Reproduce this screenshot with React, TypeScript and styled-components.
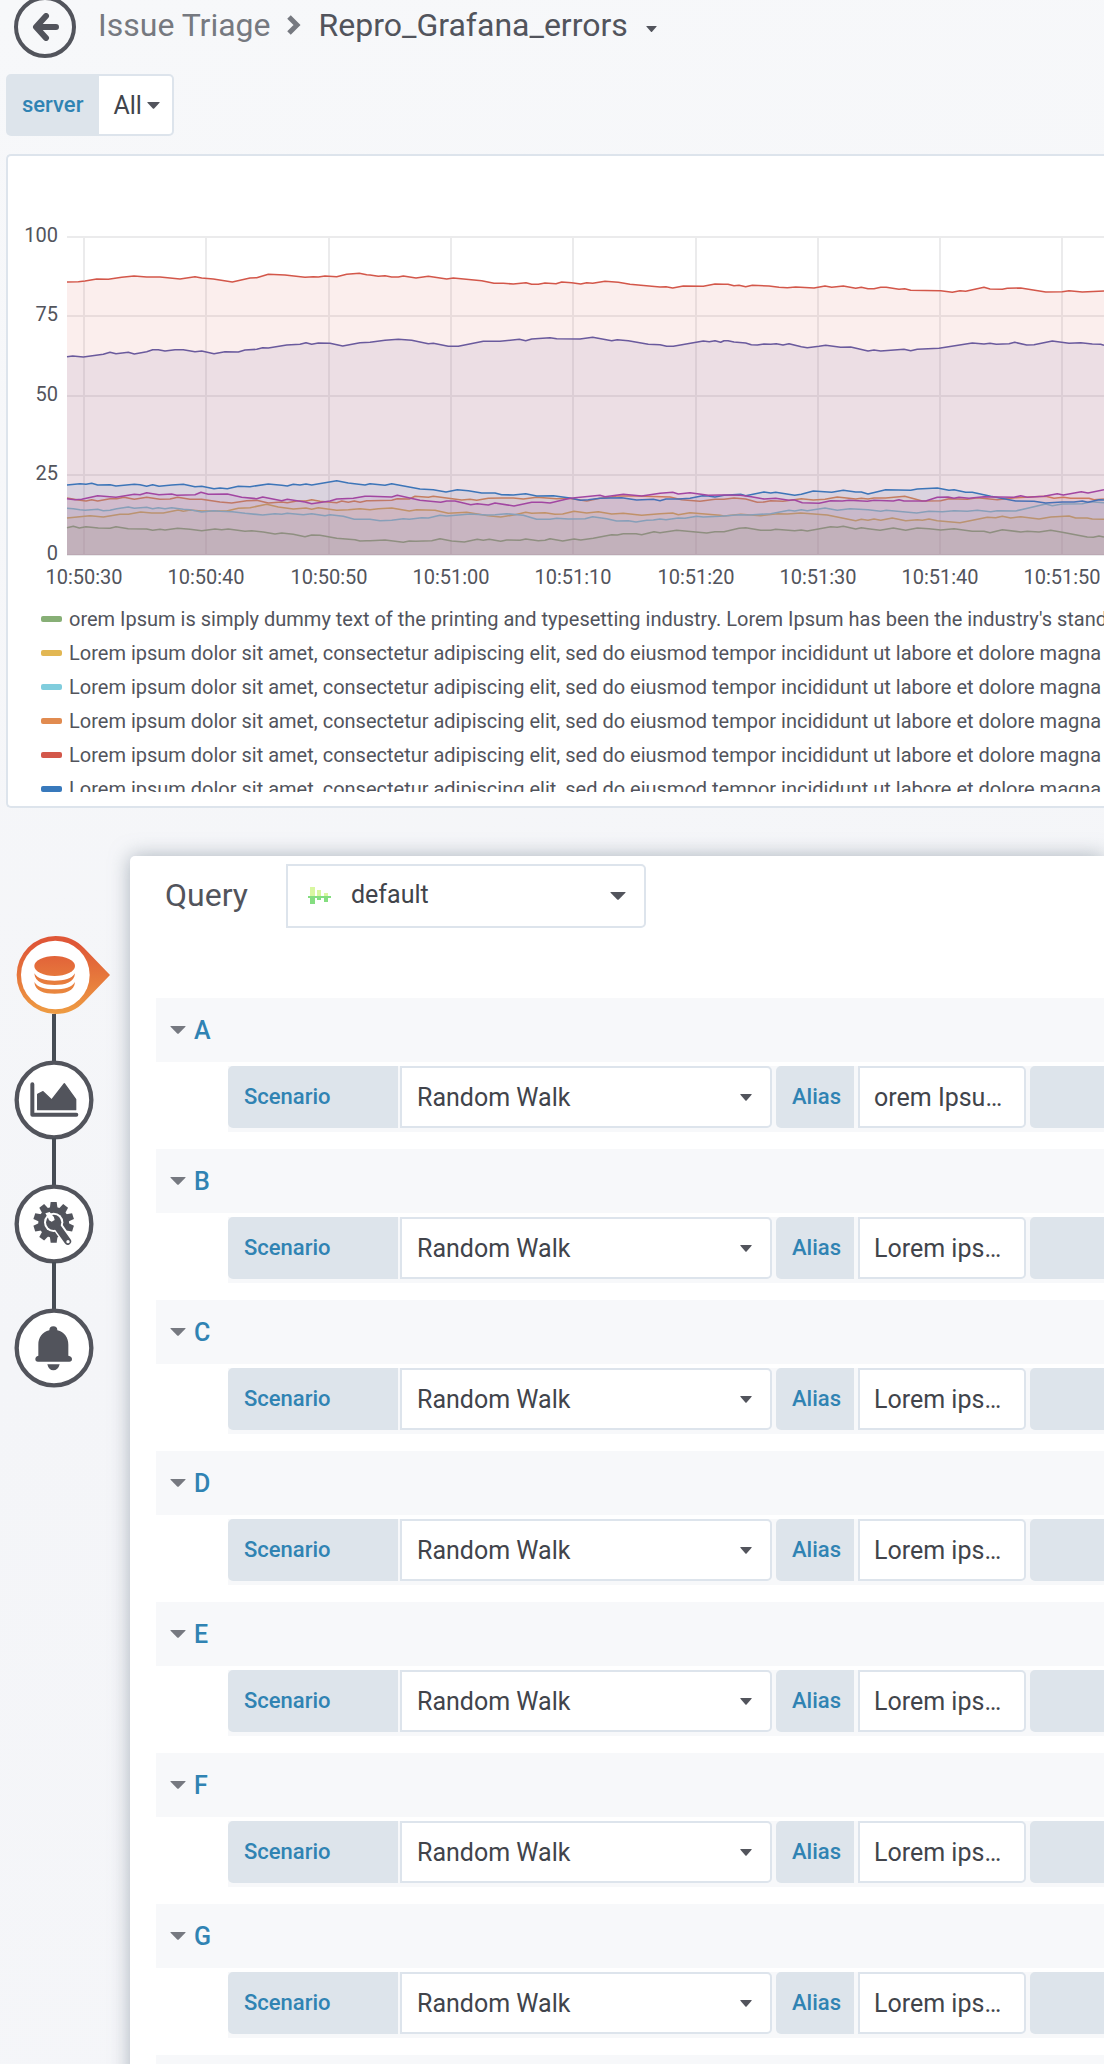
import React from "react";
import styled, { createGlobalStyle } from "styled-components";

const color = {
  text: "#52545c",
  textStrong: "#41444b",
  textWeak: "#767980",
  blue: "#3083b3",
  line: "#dde4ec",
  label: "#dde4eb",
  page: "#f7f8fa",
};

const GlobalStyle = createGlobalStyle`
  * { box-sizing: border-box; }
  body {
    margin: 0;
    font-family: Roboto, "Liberation Sans", sans-serif;
    color: ${color.text};
    background: ${color.page};
  }
  button, input, select { font: inherit; color: inherit; margin: 0; }
`;

const Shell = styled.div`
  height: 100vh;
  overflow: hidden;
  display: flex;
  flex-direction: column;
  background: linear-gradient(170deg, #f7f8fa 0%, #f4f5f8 60%, #f5f6f9 100%);
`;

/* ---------- top bar ---------- */

const TopBar = styled.header`
  flex: none;
  height: 54px;
  display: flex;
  align-items: center;
  padding-left: 14px;
`;

const BackButton = styled.button`
  flex: none;
  width: 62px;
  height: 62px;
  padding: 0;
  display: grid;
  place-items: center;
  border: 4px solid ${color.text};
  border-radius: 50%;
  background: none;
`;

const Crumbs = styled.nav`
  display: flex;
  align-items: center;
  padding: 0 0 4px 22px;
  font-size: 32px;
  line-height: 40px;
  white-space: nowrap;
`;

const FolderLink = styled.a`
  color: ${color.textWeak};
  text-decoration: none;
`;

const CrumbSeparator = styled.svg`
  margin: 0 18px 0 16px;
`;

const TitleButton = styled.button`
  display: flex;
  align-items: center;
  gap: 18px;
  padding: 0;
  border: 0;
  background: none;

  svg { margin-top: 8px; }
`;

/* ---------- form parts ---------- */

const Label = styled.label<{ $width?: number }>`
  flex: none;
  width: ${(p) => (p.$width ? `${p.$width}px` : "auto")};
  padding: 0 16px 2px;
  display: flex;
  align-items: center;
  background: ${color.label};
  border-radius: 5px 0 0 5px;
  color: ${color.blue};
  font-size: 22px;
  font-weight: 500;
`;

const SelectBox = styled.div<{ $width?: number }>`
  flex: none;
  width: ${(p) => (p.$width ? `${p.$width}px` : "auto")};
  display: grid;
  align-items: center;
  background: #fff;
  border: 2px solid ${color.line};
  border-radius: 0 5px 5px 0;

  > * { grid-area: 1 / 1; }
  > svg:last-child { justify-self: end; margin-right: 18px; pointer-events: none; }
`;

const Select = styled.select<{ $left?: number; $right?: number; $lift?: number }>`
  appearance: none;
  width: 100%;
  height: 100%;
  padding: 0 ${(p) => p.$right ?? 40}px ${(p) => p.$lift ?? 0}px ${(p) => p.$left ?? 15}px;
  border: 0;
  outline: 0;
  background: none;
  color: ${color.textStrong};
  font-size: 25px;
`;

const TextInput = styled.input`
  flex: none;
  width: 168px;
  padding: 0 16px 0 14px;
  border: 2px solid ${color.line};
  border-radius: 0 5px 5px 0;
  outline: 0;
  background: #fff;
  color: ${color.textStrong};
  font-size: 25px;
  text-overflow: ellipsis;
`;

const Variables = styled.section`
  flex: none;
  display: flex;
  height: 62px;
  margin: 20px 0 18px 6px;

  ${SelectBox} { border-left: 0; }
  ${SelectBox} > svg:last-child { margin-right: 12px; }
`;

/* ---------- graph panel ---------- */

const GraphPanel = styled.section`
  flex: none;
  margin-left: 6px;
  padding: 64px 0 14px 0;
  background: #fff;
  border: 2px solid ${color.line};
  border-right: 0;
  border-radius: 5px 0 0 5px;
`;

const ChartSvg = styled.svg`
  display: block;
  width: 100%;
  height: 378px;
  font-size: 20px;
  fill: ${color.text};
`;

const Legend = styled.ul`
  height: 194px;
  margin: 0;
  padding: 4px 0 0 33px;
  overflow: hidden;
  list-style: none;
`;

const LegendItem = styled.li`
  display: flex;
  align-items: center;
  gap: 7px;
  height: 34px;
  font-size: 20px;
  white-space: nowrap;
`;

const Swatch = styled.span<{ $color: string }>`
  flex: none;
  width: 21px;
  height: 6px;
  border-radius: 2px;
  background: ${(p) => p.$color};
`;

/* ---------- editor ---------- */

const Editor = styled.div`
  flex: 1 0 auto;
  display: flex;
  margin-top: 48px;
`;

const Steps = styled.nav`
  flex: none;
  width: 130px;
  display: flex;
  flex-direction: column;
  align-items: flex-start;
  padding: 80px 0 0 14px;
`;

const StepButton = styled.button`
  width: 80px;
  height: 80px;
  padding: 0;
  border: 0;
  background: none;

  svg { display: block; overflow: visible; }
`;

const StepLine = styled.span`
  width: 4px;
  height: 48px;
  margin: -2px 0 -2px 38px;
  background: #464c54;
`;

const QueryPanel = styled.main`
  flex: 1;
  min-width: 0;
  padding-top: 8px;
  background: #fff;
  border-radius: 5px 0 0 0;
  box-shadow: 0 0 20px rgba(120, 135, 148, 0.6);
`;

const QueryHead = styled.div`
  display: flex;
  height: 64px;
  margin-bottom: 70px;
  padding-left: 35px;
`;

const QueryTitle = styled.label`
  width: 121px;
  font-size: 32px;
  line-height: 62px;
`;

const SourceIcon = styled.svg`
  margin-left: 20px;
`;

const QueryList = styled.div`
  display: flex;
  flex-direction: column;
  gap: 17px;
  padding-left: 26px;
`;

const RowHead = styled.button`
  width: 100%;
  height: 64px;
  padding: 0 0 0 14px;
  display: flex;
  align-items: center;
  gap: 8px;
  border: 0;
  background: ${color.page};
  color: ${color.blue};
  font-size: 25px;
  font-weight: 500;
`;

const Fields = styled.div`
  display: flex;
  gap: 4px;
  height: 66px;
  margin: 4px 0 0 72px;
  padding-bottom: 4px;
  background: ${color.page};
`;

const FieldPair = styled.div<{ $gap: number }>`
  flex: none;
  display: flex;
  gap: ${(p) => p.$gap}px;
`;

const FieldRest = styled.div`
  flex: 1;
  background: ${color.label};
  border-radius: 5px 0 0 5px;
`;

/* ---------- icons ---------- */

function Caret({ width, height, fill = color.text }: { width: number; height: number; fill?: string }) {
  return (
    <svg width={width} height={height} viewBox="0 0 16 8" preserveAspectRatio="none" aria-hidden="true">
      <path d="M1 0H15Q16 0 15.4 .8L8.8 7.5Q8 8.2 7.2 7.5L.6 .8Q0 0 1 0Z" fill={fill} />
    </svg>
  );
}

function StepFrame({ children }: { children: React.ReactNode }) {
  return (
    <svg width="80" height="80" viewBox="0 0 240 240" fill={color.text} aria-hidden="true">
      <circle cx="120" cy="120" r="112" fill="#fff" stroke={color.text} strokeWidth="13" />
      {children}
    </svg>
  );
}

function QueriesStep() {
  return (
    <svg width="80" height="80" viewBox="0 0 240 240" fill="url(#flame)" aria-hidden="true">
      <defs>
        <linearGradient id="flame" gradientUnits="userSpaceOnUse" x1="0" y1="0" x2="0" y2="234">
          <stop offset="0.1" stopColor="#df5737" />
          <stop offset="1" stopColor="#ee9c42" />
        </linearGradient>
      </defs>
      <path d="M125 0C160 0 190 14 210 36L288 117L210 198C190 220 160 234 125 234A117 117 0 0 1 125 0Z" />
      <circle cx="124" cy="117" r="103" fill="#fff" />
      <ellipse cx="122" cy="90" rx="61" ry="30" />
      <path d="M61 112C63 140 90 147 122 147S181 140 183 112C174 128 150 134 122 134S70 128 61 112Z" />
      <path d="M61 138C63 166 90 173 122 173S181 166 183 138C174 154 150 160 122 160S70 154 61 138Z" />
    </svg>
  );
}

function VisualizationStep() {
  return (
    <StepFrame>
      <path d="M55 73V164H187" fill="none" stroke={color.text} strokeWidth="12" strokeLinecap="round" strokeLinejoin="round" />
      <path d="M71 103L87 95L113 120L151 71L185 118V149H71Z" stroke={color.text} strokeWidth="4" strokeLinejoin="round" />
    </StepFrame>
  );
}

function GeneralStep() {
  const teeth = Array.from({ length: 10 }, (_, i) => i * 36);
  return (
    <StepFrame>
      <circle cx="119" cy="115" r="46" />
      {teeth.map((angle) => (
        <path key={angle} d="M107 76L110 54H128L131 76Z" transform={`rotate(${angle} 119 115)`} />
      ))}
      <circle cx="119" cy="115" r="29" fill="#fff" />
      <path d="M128 124L163 174" stroke="#fff" strokeWidth="31" strokeLinecap="round" />
      <path d="M124 120L161 172" stroke={color.text} strokeWidth="21" strokeLinecap="round" />
      <circle cx="119" cy="115" r="23" />
      <path d="M94 88L107 84L115 94Q123 100 122 108L113 113L105 109L101 99Z" fill="#fff" />
      <circle cx="162" cy="173" r="5" fill="#fff" />
    </StepFrame>
  );
}

function AlertStep() {
  return (
    <StepFrame>
      <path d="M106 67A12 12 0 0 1 130 67C152 72 163 90 163 110V143Q174 145 174 153T166 161H72Q64 161 64 153T73 143V110C73 90 84 72 106 67Z" />
      <path d="M100 169H137C134 181 127 187 118 187S103 181 100 169Z" />
    </StepFrame>
  );
}

/* ---------- chart ---------- */

const PLOT_LEFT = 59;
const PLOT_TOP = 17;
const PLOT_BOTTOM = 335;

const yTicks = [
  { y: 17, text: "100" },
  { y: 96, text: "75" },
  { y: 176, text: "50" },
  { y: 255, text: "25" },
  { y: 335, text: "0" },
];

const xTicks = [
  "10:50:30", "10:50:40", "10:50:50", "10:51:00", "10:51:10",
  "10:51:20", "10:51:30", "10:51:40", "10:51:50",
].map((text, i) => ({ text, x: Math.round(76 + i * 122.3) }));

const LOREM =
  "Lorem ipsum dolor sit amet, consectetur adipiscing elit, sed do eiusmod tempor incididunt ut labore et dolore magna aliqua";
const IPSUM =
  "orem Ipsum is simply dummy text of the printing and typesetting industry. Lorem Ipsum has been the industry's standard";

/* Each series is three consecutive stretches of samples, three units to a pixel. */
const STRETCH_START = [0, 1110, 2172];

type Series = { color: string; name: string; parts: string[] };

const series: Series[] = [
  {
    color: "#87af76",
    name: IPSUM,
    parts: [
      "201,923 220,919 238,924 258,920 295,924 330,925 348,920 385,926 440,927 458,931 480,928 495,930 533,925 570,928 605,932 645,927 665,929 685,927 735,934 755,932 790,936 825,942 845,939 880,943 915,950 935,945 960,946 1010,955 1065,959 1080,963 1100,962",
      "0,962 45,960 100,967 118,963 137,964 185,962 210,956 245,963 283,966 322,958 340,961 358,958 392,964 410,960 450,961 467,957 505,962 525,961 540,956 578,963 612,957 632,960 670,955 725,944 742,945 760,941 798,941 815,944 852,935 870,938 920,931 1010,939 1035,935",
      "0,935 45,925 65,923 110,931 140,931 155,928 212,932 232,930 250,933 320,920 340,922 358,919 395,927 412,923 432,926 468,931 508,924 545,931 580,924 615,926 650,930 690,926 745,934 780,934 798,938 835,929 890,936 910,934 945,936 980,931 1015,937 1090,951 1108,952 1125,948 1140,951",
    ],
  },
  {
    color: "#e2b753",
    name: LOREM,
    parts: [
      "201,894 270,887 310,891 360,883 385,883 422,876 455,879 490,879 535,870 550,874 570,870 605,873 680,873 715,865 750,863 800,853 835,861 880,867 918,864 935,868 955,863 1010,871 1045,869 1080,866",
      "0,869 25,866 65,864 118,873 140,869 195,871 235,880 290,877 355,887 392,891 435,884 467,877 485,880 525,878 555,883 578,882 612,874 650,879 685,875 725,882 760,880 815,886 870,881 908,879 925,884 960,878 1050,886",
      "0,888 50,883 110,887 160,881 190,882 230,879 310,885 395,902 412,898 432,901 450,897 470,901 505,894 545,902 580,899 595,901 615,897 640,902 708,908 790,892 815,893 835,889 860,894 890,890 945,897 980,891 1035,888 1055,894 1090,894 1105,897 1140,898",
    ],
  },
  {
    color: "#80cddd",
    name: LOREM,
    parts: [
      "201,865 220,866 240,869 255,871 293,868 310,872 330,871 350,866 385,861 403,865 440,862 458,866 475,863 495,866 515,863 550,868 570,869 605,876 640,872 660,874 697,875 735,880 788,885 825,881 845,883 862,880 910,884 935,881 975,887 990,884 1030,889 1063,898 1100,898",
      "0,898 30,902 65,901 100,896 118,898 155,893 175,894 210,886 230,888 275,884 300,882 350,885 375,884 410,881 460,886 500,898 540,898 560,895 595,897 645,896 668,890 710,896 740,903 775,902 798,906 830,901 850,900 870,897 888,899 925,894 945,895 980,889 1000,891 1050,889",
      "0,888 45,884 75,885 140,881 195,871 212,873 232,869 250,872 303,864 340,871 378,866 432,869 470,874 487,871 578,879 615,874 655,875 690,872 730,874 760,871 800,875 820,872 875,873 965,852 985,857 1015,852 1075,851 1100,845 1140,848",
    ],
  },
  {
    color: "#e18b50",
    name: LOREM,
    parts: [
      "201,834 235,840 258,843 275,839 293,843 330,836 350,836 372,832 403,838 440,832 480,838 510,837 533,832 570,838 605,838 660,846 695,849 740,842 770,841 805,849 845,846 862,848 890,843 918,843 935,839 960,844 1010,848 1025,843 1045,847 1063,843 1080,847 1100,842",
      "0,842 65,841 82,836 118,837 135,829 175,832 190,829 275,840 300,838 320,841 355,835 395,834 430,834 460,837 500,832 560,836 595,835 650,843 690,835 720,832 740,828 800,828 900,831 935,839 990,844 1035,838",
      "0,838 30,834 65,837 100,847 120,846 140,842 177,844 232,836 268,840 303,838 340,831 395,837 412,835 432,837 450,834 485,834 542,829 595,843 650,842 675,836 730,838 760,833 820,839 875,833 930,830 965,829 990,835 1018,832 1040,835 1095,835 1110,839 1140,837",
    ],
  },
  {
    color: "#d3574a",
    name: LOREM,
    parts: [
      "201,186 235,185 255,183 290,177 325,178 365,172 402,168 440,171 480,171 510,174 540,177 585,170 605,174 640,177 697,186 750,174 770,173 805,163 855,165 915,172 940,170 955,171 975,168 1010,170 1040,163 1078,160 1100,164",
      "0,165 25,169 45,167 65,171 85,171 100,168 138,174 175,169 230,177 250,174 335,182 372,190 400,190 430,192 468,188 485,193 505,193 525,189 558,191 575,186 605,188 632,192 650,188 668,190 705,184 745,187 780,193 870,201 888,200 908,204 940,198 1000,199 1035,192",
      "0,193 12,193 30,197 45,196 65,200 85,196 135,198 165,202 190,203 215,201 270,204 303,198 323,202 358,198 395,205 412,202 432,206 450,206 470,202 487,202 525,208 542,206 560,211 650,212 685,217 708,212 725,214 780,202 798,207 835,208 850,205 890,204 965,216 1015,215 1035,212 1075,216 1140,213",
    ],
  },
  {
    color: "#3879bc",
    name: LOREM,
    parts: [
      "201,795 240,791 258,793 275,790 293,795 330,794 348,798 403,793 420,794 440,799 458,794 477,799 515,795 550,793 585,800 605,799 642,806 660,804 682,806 715,799 750,800 805,792 845,796 862,798 880,793 900,795 918,792 935,795 1010,782 1045,789 1095,795",
      "0,791 45,796 65,791 150,807 190,809 228,816 262,809 295,812 335,819 375,819 395,824 430,825 467,821 500,828 550,827 600,834 632,841 655,839 690,835 755,833 800,840 850,838 870,842 888,837 925,837 960,835 998,827 1015,828 1035,831",
      "0,826 50,823 65,827 120,816 140,819 155,817 212,826 232,823 268,813 323,817 358,811 395,816 412,816 432,822 485,809 560,811 580,807 640,804 675,811 690,809 725,817 745,817 800,829 875,843 930,844 965,849 1015,846 1050,846 1075,843 1092,847 1125,839 1140,840",
    ],
  },
  {
    color: "#a945a3",
    name: LOREM,
    parts: [
      "201,836 225,839 245,838 293,827 348,832 403,823 420,824 440,818 477,824 515,822 530,826 585,824 603,817 625,823 682,822 725,832 770,836 788,831 845,842 862,838 915,846 935,851 990,843 1010,837 1060,835 1095,829",
      "0,829 65,831 82,826 150,841 212,847 230,843 255,843 302,854 322,851 355,855 375,849 432,858 485,847 515,847 540,849 600,835 690,826 705,830 760,823 815,828 870,820 908,817 925,822 960,818 1015,826 1050,825",
      "0,825 50,826 82,830 120,837 155,835 195,841 210,839 235,848 285,850 320,842 355,843 375,841 430,844 450,841 508,843 525,839 540,843 605,843 640,832 672,831 690,835 705,832 735,835 780,830 870,832 890,827 910,832 960,829 1000,821 1018,825 1072,815 1092,819 1140,809",
    ],
  },
  {
    color: "#6a5a9d",
    name: LOREM,
    parts: [
      "201,410 218,408 250,411 310,403 330,397 348,401 385,397 403,402 440,395 458,389 475,389 495,393 525,389 550,389 585,395 605,393 642,401 675,395 715,396 735,390 770,388 788,383 805,384 860,375 900,373 918,368 935,373 955,369 990,370 1028,378 1080,368",
      "0,367 45,361 85,358 125,361 175,371 190,370 235,379 265,379 340,364 390,364 448,358 467,362 485,357 540,353 560,356 630,357 668,352 725,362 742,359 775,362 835,373 870,374 890,379 910,379 1000,363 1018,365 1035,362 1052,367",
      "0,362 12,362 30,366 65,369 82,374 100,375 120,372 140,373 157,371 177,375 195,371 232,380 250,383 285,379 305,376 350,382 380,381 432,393 450,390 470,393 540,388 560,392 580,388 645,385 745,369 780,372 798,370 817,373 855,371 872,367 908,375 930,374 985,363 1035,370 1070,368 1105,372 1130,373 1140,376",
    ],
  },
];

function toPoints(parts: string[]): string {
  return parts
    .flatMap((part, i) =>
      part.split(" ").map((pair) => {
        const [x, y] = pair.split(",").map(Number);
        return `${((x + STRETCH_START[i]) / 3 - 8).toFixed(1)},${(y / 3).toFixed(1)}`;
      })
    )
    .join(" ");
}

function Chart() {
  return (
    <ChartSvg role="img" aria-label="Server graph">
      <g stroke="#ebebec" strokeWidth="2">
        {yTicks.map((t) => (
          <line key={t.text} x1={PLOT_LEFT} x2="100%" y1={t.y} y2={t.y} />
        ))}
        {xTicks.map((t) => (
          <line key={t.text} x1={t.x} x2={t.x} y1={PLOT_TOP} y2={PLOT_BOTTOM} />
        ))}
      </g>
      {series.map((s) => {
        const points = toPoints(s.parts);
        return (
          <g key={s.color}>
            <polygon points={`${PLOT_LEFT},${PLOT_BOTTOM} ${points} 1096,${PLOT_BOTTOM}`} fill={s.color} fillOpacity="0.1" />
            <polyline points={points} fill="none" stroke={s.color} strokeWidth="1.6" strokeLinejoin="round" />
          </g>
        );
      })}
      {yTicks.map((t) => (
        <text key={t.text} x="50" y={t.y + 5} textAnchor="end">{t.text}</text>
      ))}
      {xTicks.map((t) => (
        <text key={t.text} x={t.x} y="364" textAnchor="middle">{t.text}</text>
      ))}
    </ChartSvg>
  );
}

/* ---------- query rows ---------- */

const queries = [
  { id: "A", alias: IPSUM },
  ...["B", "C", "D", "E", "F", "G", "H"].map((id) => ({ id, alias: LOREM })),
];

function QueryRow({ id, alias }: { id: string; alias: string }) {
  return (
    <section>
      <RowHead type="button">
        <Caret width={16} height={8} fill={color.textWeak} />
        {id}
      </RowHead>
      <Fields>
        <FieldPair $gap={2}>
          <Label htmlFor={`scenario-${id}`} $width={170}>Scenario</Label>
          <SelectBox $width={372}>
            <Select id={`scenario-${id}`}>
              <option>Random Walk</option>
            </Select>
            <Caret width={12} height={7} />
          </SelectBox>
        </FieldPair>
        <FieldPair $gap={4}>
          <Label htmlFor={`alias-${id}`} $width={78}>Alias</Label>
          <TextInput id={`alias-${id}`} defaultValue={alias} />
        </FieldPair>
        <FieldRest />
      </Fields>
    </section>
  );
}

export default function App() {
  return (
    <>
      <GlobalStyle />
      <Shell>
        <TopBar>
          <BackButton type="button" aria-label="Back">
            <svg width="27" height="28" viewBox="0 0 27 28" fill="none" stroke={color.text} strokeWidth="6" strokeLinecap="round" strokeLinejoin="round" aria-hidden="true">
              <path d="M14 3L4 14L14 25M5 14H24" />
            </svg>
          </BackButton>
          <Crumbs>
            <FolderLink href="#">Issue Triage</FolderLink>
            <CrumbSeparator width="14" height="20" viewBox="0 0 14 20" fill="none" stroke={color.textWeak} strokeWidth="5" aria-hidden="true">
              <path d="M2 2L10 10L2 18" />
            </CrumbSeparator>
            <TitleButton type="button">
              Repro_Grafana_errors
              <Caret width={11} height={6} />
            </TitleButton>
          </Crumbs>
        </TopBar>

        <Variables>
          <Label htmlFor="server">server</Label>
          <SelectBox>
            <Select id="server" $left={14} $right={30}>
              <option>All</option>
            </Select>
            <Caret width={13} height={7} />
          </SelectBox>
        </Variables>

        <GraphPanel>
          <Chart />
          <Legend>
            {series.map((s) => (
              <LegendItem key={s.color}>
                <Swatch $color={s.color} />
                {s.name}
              </LegendItem>
            ))}
          </Legend>
        </GraphPanel>

        <Editor>
          <Steps>
            <StepButton type="button" aria-label="Queries"><QueriesStep /></StepButton>
            <StepLine />
            <StepButton type="button" aria-label="Visualization"><VisualizationStep /></StepButton>
            <StepLine />
            <StepButton type="button" aria-label="General"><GeneralStep /></StepButton>
            <StepLine />
            <StepButton type="button" aria-label="Alert"><AlertStep /></StepButton>
          </Steps>
          <QueryPanel>
            <QueryHead>
              <QueryTitle htmlFor="source">Query</QueryTitle>
              <SelectBox $width={360}>
                <SourceIcon width="24" height="18" viewBox="0 0 24 18" aria-hidden="true">
                  <path d="M2 0H7V9H2ZM9 3H13V9H9ZM16 6H20V9H16Z" fill="#d8f7a0" />
                  <path d="M2 10H7V17H2ZM9 10H13V13H9ZM16 10H20V15H16Z" fill="#84de80" />
                  <path d="M0 10H23" stroke="#84de80" strokeWidth="2" />
                </SourceIcon>
                <Select id="source" $left={63} $lift={4}>
                  <option>default</option>
                </Select>
                <Caret width={16} height={8} />
              </SelectBox>
            </QueryHead>
            <QueryList>
              {queries.map((q) => (
                <QueryRow key={q.id} {...q} />
              ))}
            </QueryList>
          </QueryPanel>
        </Editor>
      </Shell>
    </>
  );
}
